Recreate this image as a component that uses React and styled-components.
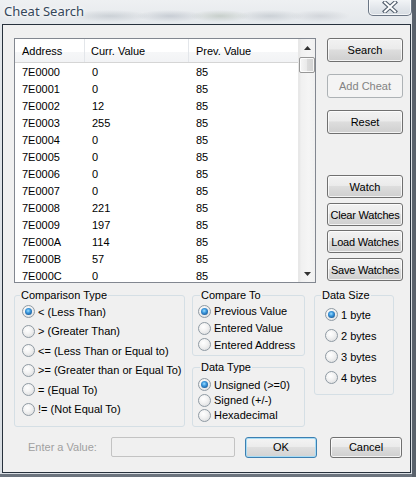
import React from "react";
import styled, { createGlobalStyle, css } from "styled-components";

const Global = createGlobalStyle`
  html, body { margin: 0; padding: 0; }
  body {
    width: 416px; height: 477px; overflow: hidden;
    font-family: "Liberation Sans", Arial, sans-serif;
    font-size: 11px; color: #000;
  }
  * { box-sizing: border-box; }
`;

const Window = styled.div`
  width: 416px;
  height: 477px;
  display: flex;
  flex-direction: column;
  padding: 0 5px 4px 2px;
  background:
    radial-gradient(ellipse 40px 6px at 110px 16px, rgba(150,160,170,0.35), transparent),
    radial-gradient(ellipse 34px 6px at 170px 16px, rgba(140,150,165,0.35), transparent),
    radial-gradient(ellipse 30px 6px at 220px 16px, rgba(150,165,150,0.4), transparent),
    radial-gradient(ellipse 34px 6px at 270px 16px, rgba(150,160,170,0.35), transparent),
    radial-gradient(ellipse 30px 6px at 320px 16px, rgba(160,165,175,0.3), transparent),
    linear-gradient(#eef0f2, #e2e6ea 30px, #d9dee3);
  box-shadow: inset -4px 0 0 #5a626c, inset 0 -3px 0 #6c747e;
`;

const TitleBar = styled.div`
  height: 24px;
  flex: none;
  display: flex;
  align-items: flex-start;
  justify-content: space-between;
`;

const Title = styled.div`
  font-family: "Noto Sans", "Open Sans", sans-serif;
  font-size: 13px;
  color: #35475b;
  padding: 2px 0 0 2px;
  line-height: 18px;
  text-shadow: 0 0 6px #fff, 0 0 3px #fff;
`;

const CloseButton = styled.div`
  width: 44px;
  height: 17px;
  margin-top: -1px;
  margin-right: -1px;
  border: 1px solid #6b7685;
  border-top: none;
  border-radius: 0 0 5px 5px;
  background: linear-gradient(#f4f6f8, #e1e5ea 60%, #d6dce2);
  box-shadow: inset 0 0 0 1px rgba(255,255,255,0.7);
  display: flex;
  align-items: center;
  justify-content: center;
`;

const Client = styled.div`
  flex: 1;
  border: 1px solid #27313c;
  background: #f0f0f0;
  padding: 13px 0 0 11px;
  display: flex;
  flex-direction: column;
`;

const TopRow = styled.div`
  display: flex;
  gap: 11px;
`;

const ListView = styled.div`
  width: 302px;
  height: 245px;
  border: 1px solid #828790;
  background: #fff;
  display: flex;
  overflow: hidden;
`;

const ListBody = styled.div`
  flex: 1;
  display: flex;
  flex-direction: column;
  overflow: hidden;
`;

const Header = styled.div`
  height: 24px;
  flex: none;
  display: grid;
  grid-template-columns: 70px 104px 1fr;
  background: linear-gradient(#ffffff 0, #ffffff 55%, #f6f7f8 56%, #f2f3f5 100%);
  border-bottom: 1px solid #d5d5d5;
`;

const HeaderCell = styled.div`
  display: flex;
  align-items: center;
  padding-left: ${p => p.$pad}px;
  border-right: 1px solid #e3e6ea;
  color: #000;
  white-space: nowrap;
  &:last-child { border-right: none; }
`;

const Row = styled.div`
  height: 17px;
  flex: none;
  display: grid;
  grid-template-columns: 70px 104px 1fr;
  align-items: center;
`;

const Cell = styled.div`
  padding-left: ${p => p.$pad}px;
  white-space: nowrap;
`;

const ScrollBar = styled.div`
  width: 17px;
  flex: none;
  display: flex;
  flex-direction: column;
  background: linear-gradient(to right, #e5e5e5 0, #f0f0f0 2px, #f5f5f5 60%, #f0f0f0);
  border-left: 1px solid #e8e8e8;
`;

const ArrowBtn = styled.div`
  height: 17px;
  flex: none;
  display: flex;
  align-items: center;
  justify-content: center;
`;

const Thumb = styled.div`
  height: 16px;
  margin: 1px 0 0 0;
  width: 16px;
  border: 1px solid #979797;
  border-radius: 2px;
  background: linear-gradient(to right, #f6f6f6, #e9e9e9 50%, #dcdcdc 51%, #d2d2d2);
  box-shadow: inset 0 0 0 1px rgba(255,255,255,0.8);
`;

const Track = styled.div`
  flex: 1;
`;

const ButtonColumn = styled.div`
  width: 76px;
  display: flex;
  flex-direction: column;
`;

const Button = styled.div`
  height: ${p => p.$h || 24}px;
  margin-top: ${p => p.$mt || 0}px;
  margin-left: ${p => p.$ml || 0}px;
  width: ${p => p.$w || 76}px;
  flex: none;
  display: flex;
  align-items: center;
  justify-content: center;
  border: 1px solid #707070;
  border-radius: 3px;
  background: linear-gradient(#f2f2f2 0, #ebebeb 45%, #dddddd 50%, #cfcfcf 100%);
  box-shadow: inset 0 0 0 1px rgba(255,255,255,0.75);
  color: #000;
  white-space: nowrap;
  letter-spacing: ${p => p.$ls || 0}px;
  ${p => p.$disabled && css`
    border-color: #adb2b5;
    background: #f4f4f4;
    box-shadow: none;
    color: #838383;
  `}
  ${p => p.$default && css`
    border-color: #3c7fb1;
    box-shadow: inset 0 0 0 1px #a7dcf5;
    background: linear-gradient(#f4f4f4 0, #ececec 45%, #dfdfdf 50%, #d2d2d2 100%);
  `}
`;

const GroupsRow = styled.div`
  display: flex;
  margin-top: 6px;
  align-items: flex-start;
`;

const Group = styled.fieldset`
  margin: 0 ${p => p.$mr || 0}px 0 0;
  padding: ${p => p.$pt || 0}px 0 0 ${p => p.$pl}px;
  width: ${p => p.$w}px;
  height: ${p => p.$h}px;
  border: 1px solid #d5dfe5;
  border-radius: 3px;
  min-width: 0;
  display: flex;
  flex-direction: column;
`;

const Legend = styled.legend`
  padding: 0 1px;
  margin-left: ${p => p.$ml}px;
  line-height: 13px;
  font-size: 11px;
  white-space: nowrap;
`;

const MiddleCol = styled.div`
  display: flex;
  flex-direction: column;
  gap: 5px;
  margin-right: 9px;
`;

const RadioRow = styled.div`
  height: ${p => p.$h}px;
  flex: none;
  display: flex;
  align-items: center;
  gap: 3px;
  white-space: nowrap;
`;

const RadioCircle = styled.span`
  width: 13px;
  height: 13px;
  flex: none;
  border-radius: 50%;
  border: 1px solid #8f9aa3;
  background: radial-gradient(circle at 40% 35%, #ffffff 0, #f3f3f3 40%, #d6d8da 100%);
  display: flex;
  align-items: center;
  justify-content: center;
  &::after {
    content: "";
    width: 7px;
    height: 7px;
    border-radius: 50%;
    display: ${p => (p.$on ? "block" : "none")};
    background: radial-gradient(circle at 45% 40%, #9fe0ff 0, #3f9be0 35%, #1b5f9e 75%, #0e3a6b 100%);
  }
`;

const BottomRow = styled.div`
  display: flex;
  align-items: center;
  margin-top: 9px;
  height: 22px;
`;

const Label = styled.div`
  color: #a0a0a0;
  width: 97px;
  padding-left: 14px;
  white-space: nowrap;
`;

const TextBox = styled.div`
  width: 124px;
  height: 20px;
  border: 1px solid #c3c3c3;
  border-radius: 2px;
  background: #f0f0f0;
  margin-right: 10px;
`;

const rows = [
  ["7E0000", "0"], ["7E0001", "0"], ["7E0002", "12"], ["7E0003", "255"],
  ["7E0004", "0"], ["7E0005", "0"], ["7E0006", "0"], ["7E0007", "0"],
  ["7E0008", "221"], ["7E0009", "197"], ["7E000A", "114"], ["7E000B", "57"],
  ["7E000C", "0"], ["7E000D", "0"],
];

function Radio({ on, h, children }) {
  return (
    <RadioRow $h={h}>
      <RadioCircle $on={on} />
      <span>{children}</span>
    </RadioRow>
  );
}

const Tri = ({ down }) => (
  <svg width="7" height="4" viewBox="0 0 7 4">
    <path d={down ? "M0 0 L7 0 L3.5 4 Z" : "M0 4 L7 4 L3.5 0 Z"} fill="#333" />
  </svg>
);

export default function App() {
  return (
    <>
      <Global />
      <Window>
        <TitleBar>
          <Title>Cheat Search</Title>
          <CloseButton>
            <svg width="16" height="12" viewBox="0 0 16 12">
              <path d="M3 1.5 L13 10.5 M13 1.5 L3 10.5" stroke="#55616f" strokeWidth="4.2" strokeLinecap="square" />
              <path d="M3 1.5 L13 10.5 M13 1.5 L3 10.5" stroke="#ffffff" strokeWidth="2" strokeLinecap="square" />
            </svg>
          </CloseButton>
        </TitleBar>
        <Client>
          <TopRow>
            <ListView>
              <ListBody>
                <Header>
                  <HeaderCell $pad={7}>Address</HeaderCell>
                  <HeaderCell $pad={6}>Curr. Value</HeaderCell>
                  <HeaderCell $pad={7}>Prev. Value</HeaderCell>
                </Header>
                {rows.map(([a, v]) => (
                  <Row key={a}>
                    <Cell $pad={7}>{a}</Cell>
                    <Cell $pad={7}>{v}</Cell>
                    <Cell $pad={7}>85</Cell>
                  </Row>
                ))}
              </ListBody>
              <ScrollBar>
                <ArrowBtn><Tri /></ArrowBtn>
                <Thumb />
                <Track />
                <ArrowBtn><Tri down /></ArrowBtn>
              </ScrollBar>
            </ListView>
            <ButtonColumn>
              <Button>Search</Button>
              <Button $mt={12} $disabled>Add Cheat</Button>
              <Button $mt={12}>Reset</Button>
              <Button $mt={41} $h={23}>Watch</Button>
              <Button $mt={5} $h={23} $ls={-0.2}>Clear Watches</Button>
              <Button $mt={4} $h={23} $ls={-0.2}>Load Watches</Button>
              <Button $mt={5} $h={23} $ls={-0.2}>Save Watches</Button>
            </ButtonColumn>
          </TopRow>
          <GroupsRow>
            <Group $w={171} $h={138} $pl={7} $mr={7}>
              <Legend $ml={-2}>Comparison Type</Legend>
              <Radio on h={19.5}>&lt; (Less Than)</Radio>
              <Radio h={19.5}>&gt; (Greater Than)</Radio>
              <Radio h={19.5}>&lt;= (Less Than or Equal to)</Radio>
              <Radio h={19.5}>&gt;= (Greater than or Equal To)</Radio>
              <Radio h={19.5}>= (Equal To)</Radio>
              <Radio h={19.5}>!= (Not Equal To)</Radio>
            </Group>
            <MiddleCol>
              <Group $w={113} $h={67} $pl={5} $pt={1}>
                <Legend $ml={2}>Compare To</Legend>
                <Radio on h={16.7}>Previous Value</Radio>
                <Radio h={16.7}>Entered Value</Radio>
                <Radio h={16.7}>Entered Address</Radio>
              </Group>
              <Group $w={113} $h={66} $pl={5} $pt={3}>
                <Legend $ml={2}>Data Type</Legend>
                <Radio on h={15.4}>Unsigned (&gt;=0)</Radio>
                <Radio h={15.4}>Signed (+/-)</Radio>
                <Radio h={15.4}>Hexadecimal</Radio>
              </Group>
            </MiddleCol>
            <Group $w={80} $h={106} $pl={10} $pt={2}>
              <Legend $ml={-4}>Data Size</Legend>
              <Radio on h={21}>1 byte</Radio>
              <Radio h={21}>2 bytes</Radio>
              <Radio h={21}>3 bytes</Radio>
              <Radio h={21}>4 bytes</Radio>
            </Group>
          </GroupsRow>
          <BottomRow>
            <Label>Enter a Value:</Label>
            <TextBox />
            <Button $w={72} $h={21} $default>OK</Button>
            <Button $w={72} $h={21} $ml={13}>Cancel</Button>
          </BottomRow>
        </Client>
      </Window>
    </>
  );
}
